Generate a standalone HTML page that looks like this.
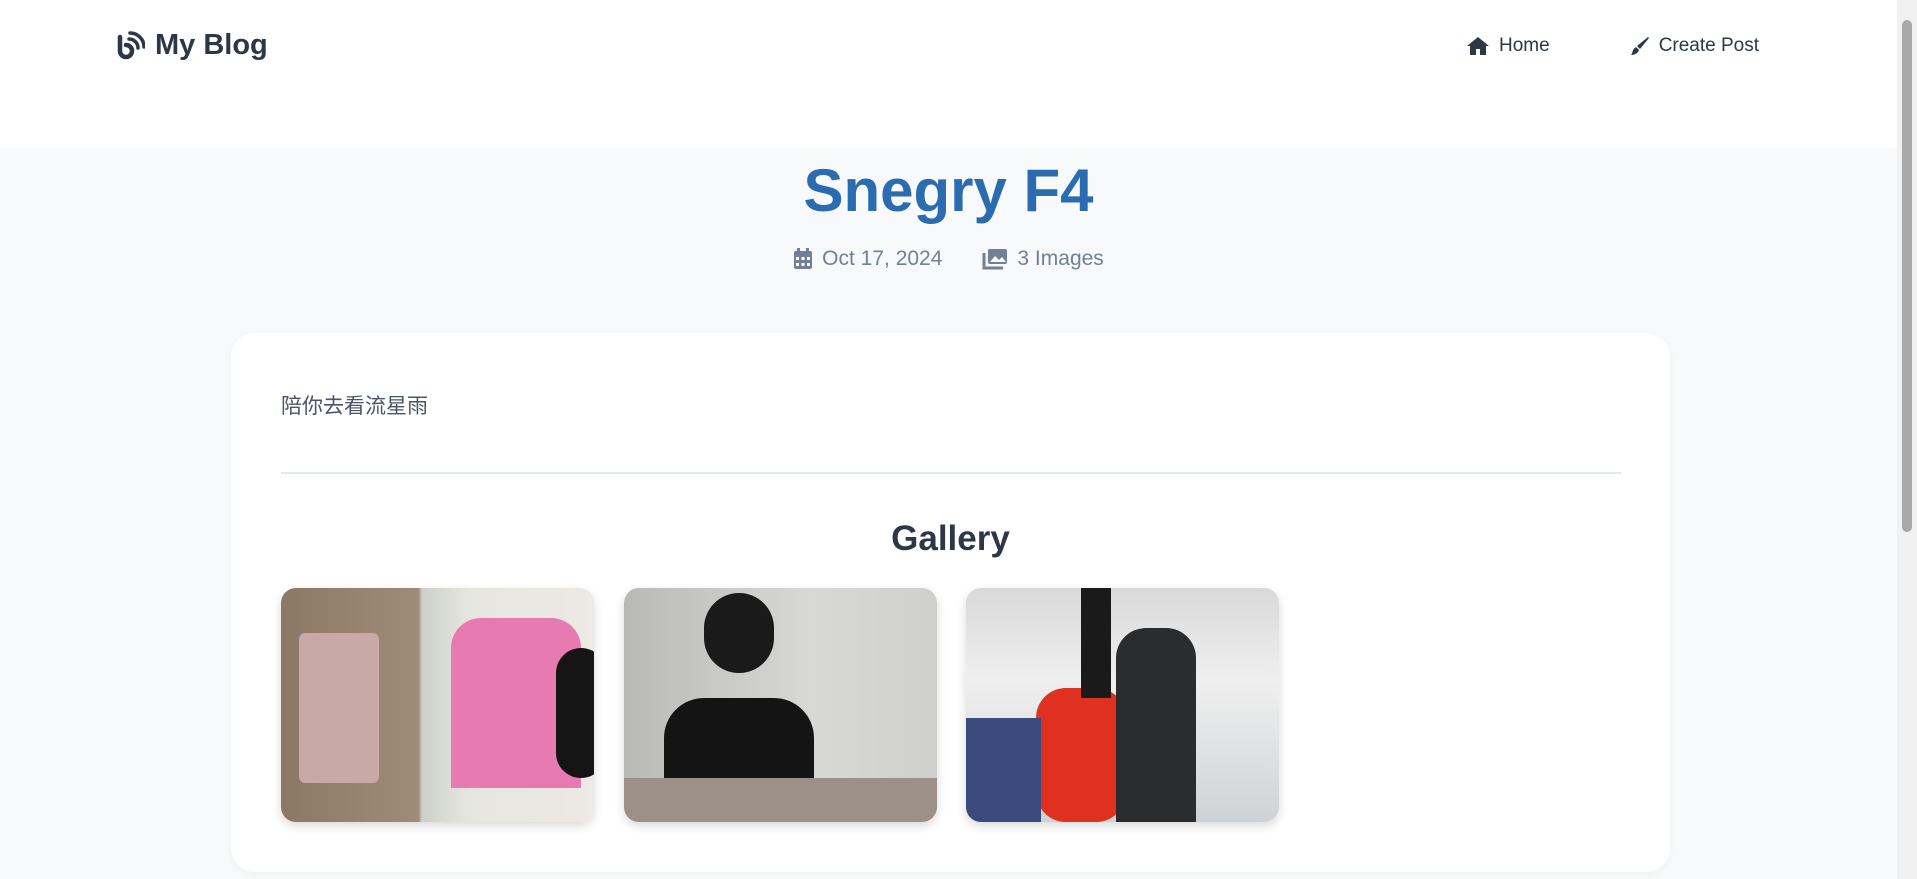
<!DOCTYPE html>
<html><head><meta charset="utf-8"><style>
*{box-sizing:border-box;margin:0;padding:0}
html,body{width:1917px;height:879px;overflow:hidden}
body{background:#f7f9fb;font-family:"Liberation Sans","Noto Sans CJK SC",sans-serif;position:relative}
.nav{position:absolute;left:0;top:0;width:1897px;height:148px;background:#fff}
.logo{position:absolute;left:115px;top:29px;display:flex;align-items:center;font-weight:700;font-size:29px;color:#2d3748}
.logo svg{margin-right:10px}
.links{position:absolute;top:35px;left:1466px;display:flex;font-size:19px;color:#2d3748}
.links span{display:flex;align-items:center}
.links svg{margin-right:9px}
h1{position:absolute;left:0;width:1897px;top:156px;text-align:center;font-size:60px;font-weight:800;color:#2b6cb0;letter-spacing:0px}
.meta{position:absolute;top:247px;left:0;width:1897px;display:flex;justify-content:center;gap:40px;font-size:21px;color:#718096}
.meta span{display:flex;align-items:center}
.meta svg{margin-right:9px}
.card{position:absolute;left:231px;top:333px;width:1439px;height:539px;background:#fff;border-radius:24px;box-shadow:0 2px 8px rgba(0,0,0,.04)}
.txt{position:absolute;left:50px;top:57px;font-size:21px;color:#4a5568}
.hr{position:absolute;left:50px;top:139px;width:1340px;height:2px;background:#e2e8f0}
.gh{position:absolute;left:0;width:1439px;top:186px;text-align:center;font-size:35px;font-weight:600;color:#2d3748}
.img{position:absolute;top:255px;width:313px;height:234px;border-radius:15px;overflow:hidden;box-shadow:0 4px 10px rgba(0,0,0,.15)}
.sb{position:absolute;right:0;top:0;width:20px;height:879px;background:#f1f1f1}
.thumb{position:absolute;left:5px;top:20px;width:10px;height:512px;background:#a8a8a8;border-radius:5px}
</style></head><body>
<div class="nav">
 <div class="logo"><svg width="30" height="30" viewBox="0 0 30 30"><path d="M5 6v14a6 6 0 1 0 6-6" fill="none" stroke="#2d3748" stroke-width="4.5" stroke-linecap="round"/><path d="M14 8a9 9 0 0 1 9 9M15 2a14 14 0 0 1 14 14" fill="none" stroke="#2d3748" stroke-width="3.5" stroke-linecap="round"/></svg>My Blog</div>
 <div class="links">
  <span><svg width="24" height="20" viewBox="0 0 24 20"><path d="M12 1L1 10h3v9h6v-6h4v6h6v-9h3z" fill="#2d3748"/></svg>Home</span>
  <span style="margin-left:80px"><svg width="20" height="20" viewBox="0 0 20 20"><path d="M18 1l1 1-9 11-3-3zM6 11l3 3c-1 3-4 5-8 5 2-2 1-6 5-8z" fill="#2d3748"/></svg>Create Post</span>
 </div>
</div>
<h1>Snegry F4</h1>
<div class="meta">
 <span><svg width="20" height="22" viewBox="0 0 20 22"><rect x="1" y="3" width="18" height="18" rx="2" fill="#718096"/><rect x="4" y="0" width="3" height="5" fill="#718096"/><rect x="13" y="0" width="3" height="5" fill="#718096"/><g fill="#fff"><rect x="3" y="9" width="3" height="3"/><rect x="8.5" y="9" width="3" height="3"/><rect x="14" y="9" width="3" height="3"/><rect x="3" y="15" width="3" height="3"/><rect x="8.5" y="15" width="3" height="3"/><rect x="14" y="15" width="3" height="3"/></g></svg>Oct 17, 2024</span>
 <span><svg width="26" height="22" viewBox="0 0 26 22"><rect x="6" y="1" width="19" height="15" rx="2" fill="#718096"/><path d="M8 14l5-6 4 4 3-3 4 5z" fill="#fff"/><path d="M2 5v15h19" fill="none" stroke="#718096" stroke-width="3"/></svg>3 Images</span>
</div>
<div class="card">
 <div class="txt">陪你去看流星雨</div>
 <div class="hr"></div>
 <div class="gh">Gallery</div>
 <div class="img" style="left:50px;background:linear-gradient(90deg,#8d7866 0,#a08b78 44%,#ccd0c8 45%,#e6e6e0 60%,#ede9e4 100%)">
  <div style="position:absolute;left:18px;top:45px;width:80px;height:150px;background:#c9a9a6;border-radius:6px"></div>
  <div style="position:absolute;left:170px;top:30px;width:130px;height:170px;background:#e87ab2;border-radius:30px 30px 0 0"></div>
  <div style="position:absolute;left:275px;top:60px;width:50px;height:130px;background:#151515;border-radius:25px"></div>
 </div>
 <div class="img" style="left:393px;background:linear-gradient(90deg,#b9b9b7,#d8d8d6 60%,#cfcfcd)">
  <div style="position:absolute;left:40px;top:110px;width:150px;height:130px;background:#141414;border-radius:40px 40px 0 0"></div>
  <div style="position:absolute;left:80px;top:5px;width:70px;height:80px;background:#1a1a1a;border-radius:35px"></div>
  <div style="position:absolute;left:0;top:190px;width:313px;height:44px;background:#9b9188"></div>
 </div>
 <div class="img" style="left:735px;background:linear-gradient(180deg,#d9d9d9,#efefef 40%,#cfd2d5)">
  <div style="position:absolute;left:70px;top:100px;width:90px;height:134px;background:#e03020;border-radius:30px"></div>
  <div style="position:absolute;left:115px;top:0;width:30px;height:110px;background:#1a1a1a"></div>
  <div style="position:absolute;left:150px;top:40px;width:80px;height:194px;background:#2a2c2e;border-radius:30px 30px 0 0"></div>
  <div style="position:absolute;left:0;top:130px;width:75px;height:104px;background:#3a4a7a"></div>
 </div>
</div>
<div class="sb"><div class="thumb"></div></div>
</body></html>
